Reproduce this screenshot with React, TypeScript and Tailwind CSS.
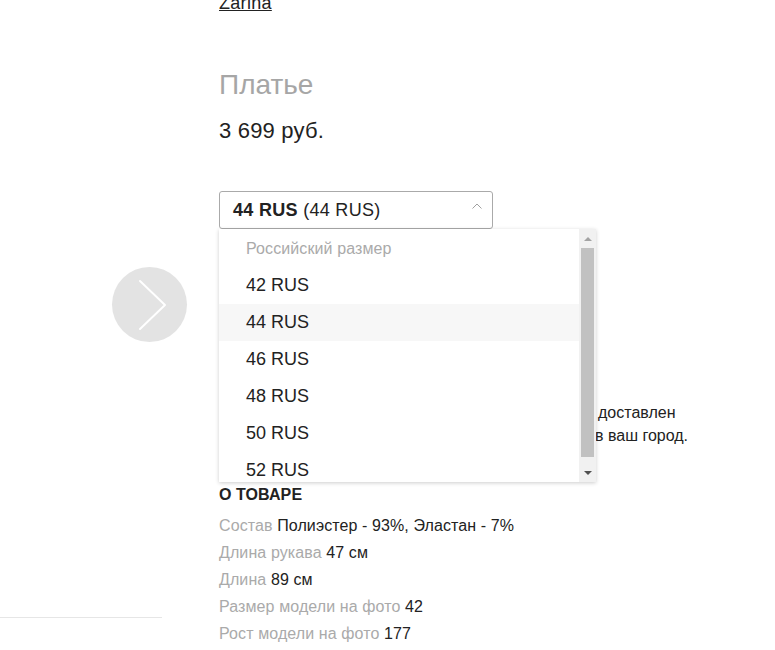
import React from "react";

const sizes = ["42 RUS", "44 RUS", "46 RUS", "48 RUS", "50 RUS", "52 RUS"];

const specs: [string, string][] = [
  ["Состав", "Полиэстер - 93%, Эластан - 7%"],
  ["Длина рукава", "47 см"],
  ["Длина", "89 см"],
  ["Размер модели на фото", "42"],
  ["Рост модели на фото", "177"],
];

export default function App() {
  return (
    <div className="w-[775px] h-[650px] overflow-hidden bg-white flex font-['Liberation_Sans',Arial,sans-serif] text-[#222]">
      {/* left gallery column */}
      <div className="w-[219px] shrink-0 flex flex-col">
        <div className="mt-[267px] ml-[112px] w-[75px] h-[75px] rounded-full bg-[#e3e3e3] flex items-center justify-center">
          <svg width="75" height="75" viewBox="0 0 75 75" fill="none">
            <path d="M28 14 L53 38 L28 62" stroke="#ffffff" strokeWidth="2" strokeLinecap="round" strokeLinejoin="round" />
          </svg>
        </div>
        <div className="mt-[275px] w-[162px] h-px bg-[#e6e6e6]" />
      </div>

      {/* main info column */}
      <div className="flex flex-col">
        <a className="-mt-[7px] text-[18px] leading-[20px] tracking-[0.3px] underline text-[#222]">Zarina</a>
        <h1 className="mt-[56px] text-[28px] leading-[32px] text-[#a6a6a6]">Платье</h1>
        <div className="mt-[17px] text-[22px] leading-[26px] tracking-[0.2px] text-[#222]">3 699 руб.</div>

        <div className="relative mt-[47px] w-[274px]">
          <div className="h-[38px] border border-[#aaaaaa] rounded-[3px] flex items-center justify-between pl-[13px] pr-[10px] text-[18px] tracking-[0.3px]">
            <span>
              <span className="font-bold">44 RUS</span>&nbsp;(44 RUS)
            </span>
            <svg width="10" height="6" viewBox="0 0 10 6" fill="none" className="-mt-[8px]">
              <path d="M0.5 5.5 L5 1 L9.5 5.5" stroke="#a0a0a0" strokeWidth="1" />
            </svg>
          </div>

          <div className="absolute left-0 top-[38px] z-10 w-[377px] h-[253px] bg-white shadow-[0_1px_4px_rgba(0,0,0,0.2)] flex">
            <div className="flex-1 flex flex-col overflow-hidden pt-[1px]">
              <div className="h-[37px] shrink-0 flex items-center pl-[27px] text-[16px] tracking-[0.1px] text-[#aaaaaa]">
                Российский размер
              </div>
              {sizes.map((s) => (
                <div
                  key={s}
                  className={
                    s === "44 RUS"
                      ? "h-[37px] shrink-0 flex items-center pl-[27px] text-[18px] bg-[#f7f7f7]"
                      : "h-[37px] shrink-0 flex items-center pl-[27px] text-[18px]"
                  }
                >
                  {s}
                </div>
              ))}
            </div>
            <div className="w-[17px] shrink-0 bg-[#f1f1f1] flex flex-col">
              <div className="h-[19px] flex items-center justify-center">
                <div className="w-0 h-0 border-l-[4px] border-r-[4px] border-b-[4px] border-l-transparent border-r-transparent border-b-[#a3a3a3]" />
              </div>
              <div className="h-[209px] mx-[2px] bg-[#c1c1c1]" />
              <div className="flex-1" />
              <div className="h-[19px] flex items-center justify-center">
                <div className="w-0 h-0 border-l-[4px] border-r-[4px] border-t-[4px] border-l-transparent border-r-transparent border-t-[#505050]" />
              </div>
            </div>
          </div>
        </div>

        <div className="mt-[172px] text-[16px] leading-[23px] text-[#222]">
          <div className="flex whitespace-nowrap">
            <div className="w-[379px] shrink-0 overflow-hidden invisible">Заказ, оформленный сегодня, будет</div>
            <div>доставлен</div>
          </div>
          <div className="flex whitespace-nowrap">
            <div className="w-[376px] shrink-0 overflow-hidden invisible">завтра курьерской службой</div>
            <div>в ваш город.</div>
          </div>
        </div>

        <h2 className="mt-[38px] text-[16px] leading-[20px] font-bold uppercase tracking-[0.1px] text-[#222]">О товаре</h2>
        <div className="mt-[7px] flex flex-col text-[16px] leading-[27px] tracking-[0.1px]">
          {specs.map(([k, v]) => (
            <div key={k}>
              <span className="text-[#aaaaaa]">{k}</span> <span className="text-[#222]">{v}</span>
            </div>
          ))}
        </div>
      </div>
    </div>
  );
}
